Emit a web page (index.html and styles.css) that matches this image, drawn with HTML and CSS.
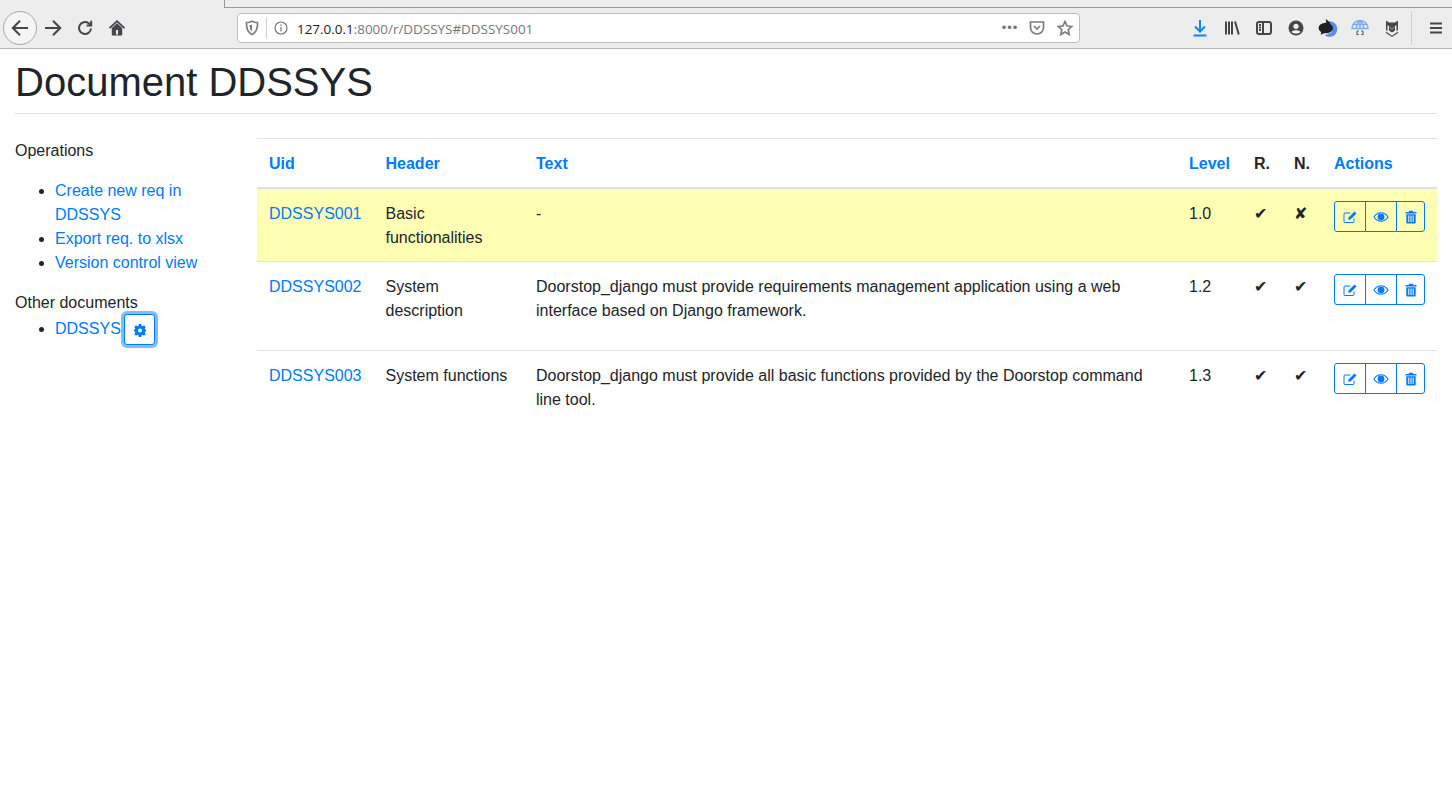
FILE: index.html
```html
<!DOCTYPE html>
<html lang="en">
<head>
    <meta charset="UTF-8">
    <title>Document DDSSYS</title>
    <link rel="stylesheet" href="styles.css">
</head>
<body>
    <!-- browser chrome -->
    <div class="tabstrip"><div class="tabline"></div></div>
    <div class="toolbar">
        <button class="back"><svg width="18" height="18" viewBox="0 0 18 18" class="ico"><path d="M17 9H1.800M9 1.800L1.800 9L9 16.200"/></svg></button>
        <span class="slot"><svg width="18" height="18" viewBox="0 0 18 18" class="ico"><path d="M1 9H16.200M9 1.800L16.200 9L9 16.200"/></svg></span>
        <span class="slot"><svg width="18" height="18" viewBox="0 0 18 18" class="ico"><path d="M15 9.500A6 6 0 1 1 12.600 4.200L15 6"/><path d="M15.200 1.800V6.400H10.600"/></svg></span>
        <span class="slot"><svg width="18" height="18" viewBox="0 0 18 18"><path d="M1.500 9.200L9 2.200L16.500 9.200" fill="none" stroke="#45464a" stroke-width="1.800"/><path fill="#45464a" fill-rule="evenodd" d="M3.800 9L9 4.200L14.200 9V15.800A0.700 0.700 0 0 1 13.500 16.500H4.500A0.700 0.700 0 0 1 3.800 15.800ZM8 11V15.500H10V11Z"/></svg></span>

        <div class="urlbar">
            <span class="url-shield"><svg width="14" height="16" viewBox="0 0 14 16" class="ico-grey"><path d="M1.500 2.500C4 2.500 5.500 2 7 1.200C8.500 2 10 2.500 12.500 2.500C12.800 8.500 11 12.500 7 14.500C3 12.500 1.200 8.500 1.500 2.500Z"/><path class="solid-grey" d="M7 4.500C6 5 5.500 5 4.500 5C4.500 8 5.500 10.500 7 11.500Z"/></svg></span>
            <span class="url-info"><svg width="14" height="14" viewBox="0 0 14 14" class="ico-thin"><circle cx="7" cy="7" r="6"/><path d="M7 6V10.500M7 3.400V5"/></svg></span>
            <span class="url-text">127.0.0.1<span class="url-rest">:8000/r/DDSSYS#DDSSYS001</span></span>
            <span class="url-dots">•••</span>
            <span class="url-icon"><svg width="16" height="16" viewBox="0 0 16 16" class="ico-grey"><path d="M1.500 2H14.500V7.500A6.500 6.500 0 0 1 1.500 7.500Z"/><path d="M5 6L8 9L11 6"/></svg></span>
            <span class="url-icon"><svg width="16" height="16" viewBox="0 0 16 16" class="ico-grey"><path d="M8 1.500L10 6L14.800 6.500L11.200 9.700L12.200 14.500L8 12L3.800 14.500L4.800 9.700L1.200 6.500L6 6Z"/></svg></span>
        </div>

        <div class="extensions">
            <span class="slot"><svg width="16" height="18" viewBox="0 0 16 18" class="ico-blue"><path d="M8 1V12M3 7.500L8 12.500L13 7.500M1.500 16.500H14.500"/></svg></span>
            <span class="slot"><svg width="16" height="16" viewBox="0 0 16 16" class="ico-dark"><path d="M2 1.500V14.500M5 1.500V14.500M8 1.500V14.500M11 1.500L14.800 14.500"/></svg></span>
            <span class="slot"><svg width="16" height="16" viewBox="0 0 16 16" class="ico-dark"><rect x="1" y="2" width="14" height="12" rx="2"/><path d="M7 2V14M3 5H5M3 7.500H5M3 10H5"/></svg></span>
            <span class="slot"><svg width="16" height="16" viewBox="0 0 16 16"><circle cx="8" cy="8" r="7.500" fill="#45464a"/><circle cx="8" cy="6.300" r="2.600" fill="#ededed"/><path d="M3.500 12C4.500 9.800 11.500 9.800 12.500 12C10 14 6 14 3.500 12Z" fill="#ededed"/></svg></span>
            <span class="slot"><svg width="20" height="20" viewBox="0 0 18 18"><path d="M10 3A7 7 0 1 1 6 15.500L12 13L13 8Z" fill="#5b8def"/><ellipse cx="7" cy="9" rx="6.500" ry="4.800" fill="#1f2024"/><path d="M3 12L2.500 15L6 13.500Z" fill="#1f2024"/><path d="M7 1L11.500 4.500L9 7.500L7.500 5Z" fill="#1f2024"/></svg></span>
            <span class="slot"><svg width="18" height="18" viewBox="0 0 18 18" fill="none" stroke="#7fa8ee" stroke-width="1.500"><path d="M1 9.500A8 8 0 0 1 17 9.500ZM5.500 9.500C5.500 5 7.500 2 9 1.500C10.500 2 12.500 5 12.500 9.500M2.500 5.500H15.500M9 1.500V9.500"/><path d="M6 12V15.500H8M12 12V15.500H10M6 12H8M10 12H12" stroke="#666666" stroke-width="1.200"/></svg></span>
            <span class="slot"><svg width="16" height="18" viewBox="0 0 16 18"><path d="M2 1.500L5 3.500H11L14 1.500V11L12.500 12V6L8 10L3.500 6V12L2 11Z" fill="#45464a"/><path d="M5 7.500L8 10.800L11 7.500V11.500L8 13.500L5 11.500Z" fill="#45464a"/><path d="M2 12.500L8 16.800L14 12.500V14L8 18L2 14Z" fill="#45464a"/></svg></span>
        </div>
        <div class="sep"></div>
        <span class="slot"><svg width="14" height="12" viewBox="0 0 14 12" class="ico-dark"><path d="M1 1.500H13M1 6H13M1 10.500H13"/></svg></span>
    </div>

    <!-- page -->
    <div class="page">
        <h1 class="title">Document DDSSYS</h1>
        <hr class="rule">
        <div class="columns">
            <div class="sidebar">
                <p class="side-head">Operations</p>
                <ul class="side-list">
                    <li><a href="#">Create new req in DDSSYS</a></li>
                    <li><a href="#">Export req. to xlsx</a></li>
                    <li><a href="#">Version control view</a></li>
                </ul>
                <div class="side-head-tight">Other documents</div>
                <ul class="side-list tight">
                    <li><a href="#">DDSSYS</a>
                        <button class="btn btn-focus"><svg width="14" height="14" viewBox="0 0 14 14"><path class="gear" fill-rule="evenodd" d="M5.800 1H8.200L8.500 2.700L9.600 3.200L11 2.200L12.700 3.900L11.700 5.300L12.200 6.400L13 6.800V8.200L12.200 8.600L11.700 9.700L12.700 11.100L11 12.800L9.600 11.800L8.500 12.300L8.200 14H5.800L5.500 12.300L4.400 11.800L3 12.800L1.300 11.100L2.300 9.700L1.800 8.600L1 8.200V6.800L1.800 6.400L2.300 5.300L1.300 3.900L3 2.200L4.400 3.200L5.500 2.700ZM7 5.500A2 2 0 1 0 7 9.500A2 2 0 1 0 7 5.500Z"/></svg></button>
                    </li>
                </ul>
            </div>
            <div class="main">
                <table class="reqs">
                    <colgroup>
                        <col class="c-uid"><col class="c-header"><col class="c-text"><col class="c-level"><col class="c-flag"><col class="c-flag"><col class="c-actions">
                    </colgroup>
                    <thead>
                        <tr>
                            <th><a href="#">Uid</a></th>
                            <th><a href="#">Header</a></th>
                            <th><a href="#">Text</a></th>
                            <th><a href="#">Level</a></th>
                            <th>R.</th>
                            <th>N.</th>
                            <th><a href="#">Actions</a></th>
                        </tr>
                    </thead>
                    <tbody>
                        <tr class="current">
                            <td><a href="#">DDSSYS001</a></td>
                            <td>Basic functionalities</td>
                            <td><p>-</p></td>
                            <td>1.0</td>
                            <td>✔</td>
                            <td>✘</td>
                            <td>
                                <div class="btn-group">
                                    <button class="btn"><svg width="15" height="14" viewBox="0 0 15 14"><path class="ln" d="M11 8.500V11.500A1 1 0 0 1 10 12.500H2A1 1 0 0 1 1 11.500V4A1 1 0 0 1 2 3H7.500"/><path class="fl" d="M5.500 7.500L11.500 1.500L13.500 3.500L7.500 9.500L5.200 9.800Z"/></svg></button>
                                    <button class="btn"><svg width="16" height="12" viewBox="0 0 16 12"><path class="fl" fill-rule="evenodd" d="M0.300 6C2 3 4.800 1.300 8 1.300C11.200 1.300 14 3 15.700 6C14 9 11.200 10.700 8 10.700C4.800 10.700 2 9 0.300 6ZM8 2.300C5.300 2.300 3 3.800 1.600 6C3 8.200 5.300 9.700 8 9.700C10.700 9.700 13 8.200 14.400 6C13 3.800 10.700 2.300 8 2.300Z"/><circle class="fl" cx="8" cy="6" r="3.400"/></svg></button>
                                    <button class="btn"><svg width="12" height="14" viewBox="0 0 12 14"><path class="fl" fill-rule="evenodd" d="M0.500 2H3.500L4.300 0.700H7.700L8.500 2H11.500V3.500H0.500ZM1.300 4.300H10.700V12.500A1 1 0 0 1 9.700 13.500H2.300A1 1 0 0 1 1.300 12.500ZM3.300 5.500V12H4.300V5.500ZM5.500 5.500V12H6.500V5.500ZM7.700 5.500V12H8.700V5.500Z"/></svg></button>
                                </div>
                            </td>
                        </tr>
                        <tr>
                            <td><a href="#">DDSSYS002</a></td>
                            <td>System description</td>
                            <td><p>Doorstop_django must provide requirements management application using a web interface based on Django framework.</p></td>
                            <td>1.2</td>
                            <td>✔</td>
                            <td>✔</td>
                            <td>
                                <div class="btn-group">
                                    <button class="btn"><svg width="15" height="14" viewBox="0 0 15 14"><path class="ln" d="M11 8.500V11.500A1 1 0 0 1 10 12.500H2A1 1 0 0 1 1 11.500V4A1 1 0 0 1 2 3H7.500"/><path class="fl" d="M5.500 7.500L11.500 1.500L13.500 3.500L7.500 9.500L5.200 9.800Z"/></svg></button>
                                    <button class="btn"><svg width="16" height="12" viewBox="0 0 16 12"><path class="fl" fill-rule="evenodd" d="M0.300 6C2 3 4.800 1.300 8 1.300C11.200 1.300 14 3 15.700 6C14 9 11.200 10.700 8 10.700C4.800 10.700 2 9 0.300 6ZM8 2.300C5.300 2.300 3 3.800 1.600 6C3 8.200 5.300 9.700 8 9.700C10.700 9.700 13 8.200 14.400 6C13 3.800 10.700 2.300 8 2.300Z"/><circle class="fl" cx="8" cy="6" r="3.400"/></svg></button>
                                    <button class="btn"><svg width="12" height="14" viewBox="0 0 12 14"><path class="fl" fill-rule="evenodd" d="M0.500 2H3.500L4.300 0.700H7.700L8.500 2H11.500V3.500H0.500ZM1.300 4.300H10.700V12.500A1 1 0 0 1 9.700 13.500H2.300A1 1 0 0 1 1.300 12.500ZM3.300 5.500V12H4.300V5.500ZM5.500 5.500V12H6.500V5.500ZM7.700 5.500V12H8.700V5.500Z"/></svg></button>
                                </div>
                            </td>
                        </tr>
                        <tr>
                            <td><a href="#">DDSSYS003</a></td>
                            <td>System functions</td>
                            <td><p>Doorstop_django must provide all basic functions provided by the Doorstop command line tool.</p></td>
                            <td>1.3</td>
                            <td>✔</td>
                            <td>✔</td>
                            <td>
                                <div class="btn-group">
                                    <button class="btn"><svg width="15" height="14" viewBox="0 0 15 14"><path class="ln" d="M11 8.500V11.500A1 1 0 0 1 10 12.500H2A1 1 0 0 1 1 11.500V4A1 1 0 0 1 2 3H7.500"/><path class="fl" d="M5.500 7.500L11.500 1.500L13.500 3.500L7.500 9.500L5.200 9.800Z"/></svg></button>
                                    <button class="btn"><svg width="16" height="12" viewBox="0 0 16 12"><path class="fl" fill-rule="evenodd" d="M0.300 6C2 3 4.800 1.300 8 1.300C11.200 1.300 14 3 15.700 6C14 9 11.200 10.700 8 10.700C4.800 10.700 2 9 0.300 6ZM8 2.300C5.300 2.300 3 3.800 1.600 6C3 8.200 5.300 9.700 8 9.700C10.700 9.700 13 8.200 14.400 6C13 3.800 10.700 2.300 8 2.300Z"/><circle class="fl" cx="8" cy="6" r="3.400"/></svg></button>
                                    <button class="btn"><svg width="12" height="14" viewBox="0 0 12 14"><path class="fl" fill-rule="evenodd" d="M0.500 2H3.500L4.300 0.700H7.700L8.500 2H11.500V3.500H0.500ZM1.300 4.300H10.700V12.500A1 1 0 0 1 9.700 13.500H2.300A1 1 0 0 1 1.300 12.500ZM3.300 5.500V12H4.300V5.500ZM5.500 5.500V12H6.500V5.500ZM7.700 5.500V12H8.700V5.500Z"/></svg></button>
                                </div>
                            </td>
                        </tr>
                    </tbody>
                </table>
            </div>
        </div>
    </div>
</body>
</html>
```

FILE: styles.css
```css
/* Page base */
body {
    margin: 0;
    font-family: "Liberation Sans", Arial, sans-serif;
    font-size: 16px;
    line-height: 24px;
    color: #212529;
    background: #ffffff;
}

a {
    color: #007bff;
    text-decoration: none;
}

/* Browser chrome */
.tabstrip {
    height: 8px;
    background: #ededed;
}

.tabline {
    height: 8px;
    box-sizing: border-box;
    margin-left: 224px;
    border-left: 1px solid #9a9a9a;
    border-bottom: 1px solid #9a9a9a;
}

.toolbar {
    display: flex;
    align-items: center;
    height: 40px;
    box-sizing: content-box;
    padding-left: 3px;
    background: #ededed;
    border-bottom: 1px solid #b6b6b6;
}

.back {
    width: 34px;
    height: 34px;
    padding: 0;
    display: flex;
    align-items: center;
    justify-content: center;
    background: #f5f5f5;
    border: 1px solid #a8a8a8;
    border-radius: 50%;
}

.slot {
    width: 32px;
    height: 32px;
    flex: none;
    display: flex;
    align-items: center;
    justify-content: center;
}

.ico, .ico-grey, .ico-thin, .ico-blue, .ico-dark {
    fill: none;
    stroke-width: 2;
}

.ico { stroke: #45464a; }
.ico-grey { stroke: #7c7c7f; stroke-width: 1.7; }
.ico-thin { stroke: #77777a; stroke-width: 1.2; }
.ico-blue { stroke: #0a84ff; }
.ico-dark { stroke: #45464a; }

.ico-grey .solid-grey { fill: #7c7c7f; stroke: none; }

.urlbar {
    display: flex;
    align-items: center;
    width: 843px;
    height: 30px;
    box-sizing: border-box;
    margin-left: 104px;
    background: #ffffff;
    border: 1px solid #bdbdbd;
    border-radius: 4px;
}

.url-shield {
    width: 28px;
    height: 22px;
    flex: none;
    display: flex;
    align-items: center;
    justify-content: center;
    border-right: 1px solid #cfcfcf;
}

.url-info {
    width: 28px;
    flex: none;
    display: flex;
    align-items: center;
    justify-content: center;
}

.url-text {
    flex: 1;
    margin-left: 2px;
    padding-top: 1px;
    font-family: "Open Sans", "Noto Sans", sans-serif;
    font-size: 13.45px;
    color: #222222;
}

.url-rest {
    color: #777777;
}

.url-dots {
    width: 26px;
    font-size: 13px;
    letter-spacing: 1px;
    color: #77777a;
    text-align: center;
}

.url-icon {
    width: 28px;
    flex: none;
    display: flex;
    align-items: center;
    justify-content: center;
}

.extensions {
    display: flex;
    margin-left: 104px;
}

.sep {
    width: 1px;
    height: 34px;
    margin: 0 8px 0 3px;
    background: #d0d0d0;
}

/* Page */
.page {
    padding: 0 15px;
}

.title {
    margin: 9px 0 0;
    font-size: 40px;
    font-weight: 400;
    line-height: 48px;
}

.rule {
    margin: 7px 0 24px;
    border: 0;
    border-top: 1px solid #dfdfdf;
}

.columns {
    display: flex;
}

.sidebar {
    width: 212px;
    flex: none;
    margin-right: 30px;
    padding-top: 1px;
}

.side-head {
    margin: 0 0 16px;
}

.side-head-tight {
    margin: 0;
}

.side-list {
    margin: 0 0 16px;
    padding-left: 40px;
}

.side-list.tight {
    margin: -1px 0 0;
}

.main {
    flex: 1;
}

/* Requirements table */
.reqs {
    width: 100%;
    table-layout: fixed;
    border-collapse: collapse;
}

.c-uid { width: 116.5px; }
.c-header { width: 150.5px; }
.c-level { width: 65px; }
.c-flag { width: 40px; }
.c-actions { width: 115px; }

/* 13/11 instead of 12/12 puts the text on the same pixel row as the target */
.reqs th, .reqs td {
    padding: 13px 12px 11px;
    text-align: left;
    vertical-align: top;
    border-top: 1px solid #dee2e6;
}

.reqs th {
    font-weight: 700;
    border-bottom: 2px solid #dee2e6;
}

.reqs p {
    margin: 0 0 16px;
}

.current td {
    background: #ffffb3;
}

/* Buttons */
.btn {
    width: 31px;
    height: 31px;
    padding: 0;
    display: inline-flex;
    align-items: center;
    justify-content: center;
    vertical-align: middle;
    background: transparent;
    border: 1px solid #007bff;
    border-radius: 3px;
}

.btn-focus {
    margin-left: -1px;
    background: #ffffff;
    box-shadow: 0 0 0 3px rgba(0, 123, 255, 0.5);
}

.btn-group {
    display: flex;
    margin-top: -1px;
}

.btn-group .btn {
    flex: none;
    width: 32px;
    border-radius: 0;
    margin-left: -1px;
}

.btn-group .btn:first-child {
    margin-left: 0;
    border-radius: 3px 0 0 3px;
}

.btn-group .btn:last-child {
    width: 29px;
    border-radius: 0 3px 3px 0;
}

.btn .gear, .btn .fl {
    fill: #007bff;
}

.btn .ln {
    fill: none;
    stroke: #007bff;
    stroke-width: 1;
}
```
